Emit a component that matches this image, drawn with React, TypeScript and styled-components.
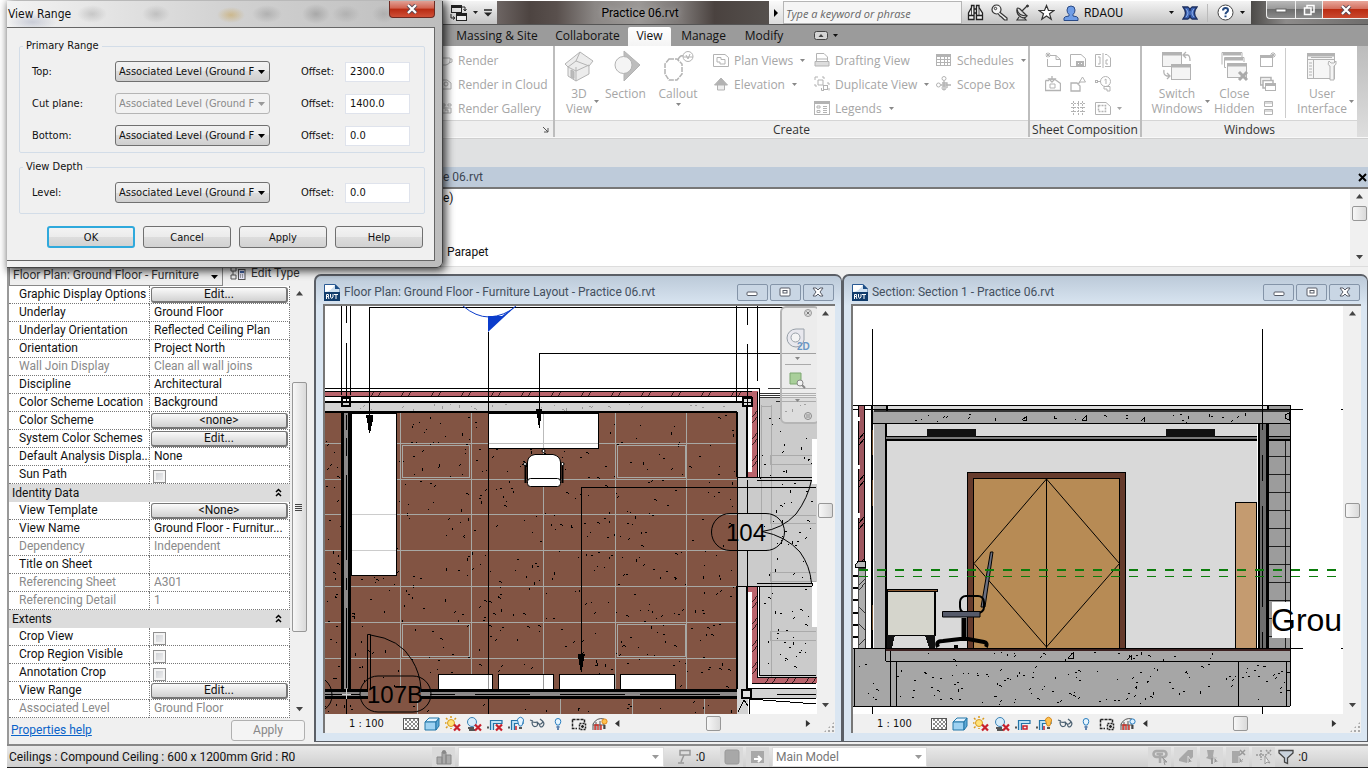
import React from 'react';
import styled, { createGlobalStyle, css } from 'styled-components';

const UI = 'Roboto, "Open Sans", sans-serif';
const RIBBON = '"Open Sans", "Noto Sans", sans-serif';
const DLG = '"DejaVu Sans Condensed", "DejaVu Sans", sans-serif';

const Global = createGlobalStyle`
  * { box-sizing: border-box; }
  body { margin: 0; background: #fff; font-family: ${UI}; font-size: 12px; color: #111; }
  button, input, select { font: inherit; color: inherit; margin: 0; }
  button { padding: 0; border: 0; background: none; }
`;

/* ---------- shared pieces ---------- */

const Shell = styled.main`
  position: relative;
  display: flex;
  flex-direction: column;
  min-height: 100vh;
  padding-left: 7px;
  overflow: hidden;
`;

const Svg = styled.svg<{ $w?: number; $h?: number }>`
  display: block;
  flex: none;
  width: ${p => p.$w ?? 16}px;
  height: ${p => p.$h ?? p.$w ?? 16}px;
  fill: none;
  stroke: currentColor;
`;

type IconProps = { children: React.ReactNode; size?: number; color?: string; box?: number };
const Icon = ({ children, size = 16, color, box }: IconProps) => (
  <Svg $w={size} viewBox={`0 0 ${box ?? size} ${box ?? size}`} color={color} aria-hidden="true">
    {children}
  </Svg>
);

const CaretSvg = styled.svg`
  display: block;
  flex: none;
  width: 5px;
  height: 3px;
  fill: currentColor;
`;
const Caret = () => (
  <CaretSvg viewBox="0 0 5 3" aria-hidden="true">
    <path d="M0 0H5L2.500 3Z" />
  </CaretSvg>
);

/* ---------- title bar ---------- */

const TitleBar = styled.header`
  display: flex;
  height: 25px;
  flex: none;
  border-top: 1px solid #fff;
  border-bottom: 1px solid #555;
  background: linear-gradient(#f4f4f4, #c4c4c4);
`;
const QuickAccess = styled.div`
  display: flex;
  align-items: center;
  gap: 6px;
  width: 490px;
  padding-left: 442px;
  color: #222;
`;
const TitleText = styled.h1`
  display: flex;
  flex: 1;
  align-items: center;
  justify-content: center;
  margin: 0;
  padding-left: 14px;
  overflow: hidden;
  font-size: 12px;
  font-weight: 400;
  color: #000;
  white-space: nowrap;
  text-shadow: 0 0 6px #bbb;
  background: linear-gradient(90deg, #6d6563 0, #4d4441 12%, #59504d 22%, #8b8785 36%, #9b9896 52%, #7c7775 68%, #4a423f 80%, #55504d 100%);
`;
const SearchGo = styled.button`
  width: 14px;
  background: linear-gradient(#fafafa, #dcdcdc);
  svg { margin: auto; }
`;
const SearchBox = styled.input`
  width: 179px;
  padding: 2px 2px 0;
  border: 1px solid #b5b5b5;
  background: #f5f5f5;
  font-family: ${RIBBON};
  font-size: 11px;
  font-style: italic;
  &::placeholder { color: #666; opacity: 1; }
`;
const InfoTools = styled.div`
  display: flex;
  align-items: center;
  justify-content: space-between;
  width: 101px;
  padding: 0 8px 0 5px;
`;
const Account = styled.button`
  display: flex;
  align-items: center;
  gap: 5px;
  width: 111px;
  span { flex: 1; text-align: left; }
`;
const ToolButton = styled.button`
  display: flex;
  align-items: center;
  justify-content: center;
  gap: 6px;
  height: 100%;
`;
const InfoEnd = styled.div`
  display: flex;
  align-items: center;
  gap: 9px;
  width: 77px;
  padding-left: 8px;
`;
const Rule = styled.span`
  width: 1px;
  height: 18px;
  background: #bbb;
`;
const FrameEnd = styled.div`
  display: flex;
  align-items: flex-start;
  justify-content: flex-end;
  width: 117px;
  background: linear-gradient(90deg, #4c4a48, #8d8b8a 30%, #6f6d6c);
`;
const FrameButton = styled.button<{ $w: number; $close?: boolean }>`
  display: flex;
  align-items: center;
  justify-content: center;
  width: ${p => p.$w}px;
  height: 18px;
  border: 1px solid #eee;
  border-top: 0;
  border-right-width: 0;
  color: #fff;
  background: ${p =>
    p.$close
      ? 'linear-gradient(#e8a79b, #d4705f 45%, #bb2c12 50%, #c9482f)'
      : 'linear-gradient(#b9b9b9, #9a9a9a 45%, #6d6d6d 50%, #8b8b8b)'};
  &:first-child { border-bottom-left-radius: 4px; }
`;

const CloseGlyph = () => (
  <Svg $w={12} $h={10} viewBox="0 0 12 10" aria-hidden="true">
    <path d="M2 1L10 9M10 1L2 9" stroke="#5b4a55" strokeWidth="4" />
    <path d="M2 1L10 9M10 1L2 9" stroke="#fff" strokeWidth="2.200" />
  </Svg>
);

/* ---------- ribbon ---------- */

const TabBar = styled.nav`
  display: flex;
  align-items: stretch;
  height: 21px;
  flex: none;
  padding-left: 440px;
  background: #9b9b9b;
  font-family: ${RIBBON};
`;
const Tab = styled.button<{ $w: number; $active?: boolean }>`
  width: ${p => p.$w}px;
  white-space: nowrap;
  color: #111;
  ${p => p.$active && css`
    margin-top: 2px;
    padding-bottom: 2px;
    border-radius: 2px 2px 0 0;
    background: linear-gradient(#fff, #f4f4f4);
  `}
`;
const TabToggle = styled.button`
  display: flex;
  align-items: center;
  gap: 5px;
  margin-left: 22px;
`;
const Ribbon = styled.section`
  display: flex;
  height: 92px;
  flex: none;
  border-bottom: 1px solid #f8f8f8;
  background: linear-gradient(#bcbcbc, #dedede);
  font-family: ${RIBBON};
  overflow: hidden;
`;
const RibbonPanel = styled.div<{ $w: number; $grow?: boolean }>`
  display: flex;
  flex-direction: column;
  flex: ${p => (p.$grow ? '1 0' : '0 0')} ${p => p.$w}px;
  background: #fff;
  & + & { border-left: 2px solid #bdbdbd; }
`;
const PanelBody = styled.div<{ $pad?: number }>`
  display: flex;
  flex: 1;
  padding: 2px 0 0 ${p => p.$pad ?? 0}px;
  color: #a6a6a6;
`;
const PanelTitle = styled.div`
  display: flex;
  align-items: center;
  justify-content: center;
  height: 17px;
  flex: none;
  border-top: 1px solid #d5d5d5;
  background: #efefef;
  color: #333;
  white-space: nowrap;
`;
const Launcher = styled.button`
  margin-left: auto;
  margin-right: 4px;
  color: #555;
`;
const CommandColumn = styled.div<{ $w?: number; $lead?: boolean }>`
  display: flex;
  flex-direction: column;
  flex: none;
  width: ${p => (p.$w ? `${p.$w}px` : 'auto')};
  margin-left: ${p => (p.$lead ? 4 : 0)}px;
`;
const Command = styled.button`
  display: flex;
  align-items: center;
  gap: 5px;
  height: 24px;
  white-space: nowrap;
  svg:last-child:not(:first-child) { color: #888; margin-left: 2px; }
`;
const BigCommand = styled.button<{ $w: number }>`
  display: flex;
  flex-direction: column;
  flex: none;
  align-items: center;
  width: ${p => p.$w}px;
  padding-top: 2px;
  line-height: 15px;
`;
const BigLabel = styled.span`
  display: grid;
  grid-template-columns: 1fr auto 1fr;
  align-items: center;
  align-self: stretch;
  gap: 2px;
  margin-top: 4px;
  svg { grid-column: 3; color: #888; }
  span { grid-column: 2; }
`;
const BelowCaret = styled.span`
  margin-top: 2px;
  color: #888;
`;
const IconGrid = styled.div`
  display: grid;
  grid-template-columns: 25px 25px 40px;
  grid-template-rows: 24px 24px 24px;
`;
const GridButton = styled.button<{ $col?: number }>`
  display: flex;
  align-items: center;
  gap: 6px;
  grid-column: ${p => p.$col ?? 'auto'};
`;
const PanelRule = styled.span`
  width: 1px;
  margin: 0 3px 2px 9px;
  background: #ccc;
`;
const RibbonTail = styled.span`
  width: 11px;
  flex: none;
`;

/* ---------- option strip and document view ---------- */

const OptionStrip = styled.div`
  height: 29px;
  flex: none;
  border-top: 1px solid #cfcfcf;
  background: #e0e1e2;
`;
const DocTitle = styled.div`
  display: flex;
  align-items: center;
  justify-content: space-between;
  height: 20px;
  flex: none;
  padding: 0 0 0 436px;
  background: #becbda;
  color: #3c4652;
`;
const DocClose = styled.button`
  color: #000;
`;
const DocView = styled.section`
  display: flex;
  height: 80px;
  flex: none;
  border-top: 2px solid #777;
  border-bottom: 1px solid #ddd;
  background: #fff;
`;
const DocLines = styled.div`
  display: flex;
  flex: 1;
  flex-direction: column;
  justify-content: space-between;
  padding: 1px 0 6px 436px;
  line-height: 16px;
`;
const LineTail = styled.span`
  padding-left: 4px;
`;

/* ---------- scroll bars ---------- */

const VTrack = styled.div`
  display: flex;
  flex-direction: column;
  align-items: center;
  justify-content: space-between;
  width: 18px;
  flex: none;
  background: #f0f0f0;
  color: #444;
`;
const HTrack = styled.div`
  display: flex;
  flex: 1;
  align-items: center;
  justify-content: space-between;
  min-width: 60px;
  color: #333;
`;
const Arrow = styled.button`
  display: flex;
  align-items: center;
  justify-content: center;
  flex: none;
  width: 17px;
  height: 17px;
`;
const Thumb = styled.span<{ $long?: boolean }>`
  display: flex;
  align-items: center;
  justify-content: center;
  width: 15px;
  ${p => (p.$long ? 'flex: 250 0 0;' : 'height: 15px;')}
  border: 1px solid #979797;
  border-radius: 2px;
  background: linear-gradient(90deg, #f7f7f7, #dadada);
`;
const Gap = styled.span<{ $grow: number }>`
  flex: ${p => p.$grow} 0 0;
`;
const arrows = {
  up: 'M0 5L4 0L8 5Z',
  down: 'M0 1L4 6L8 1Z',
  left: 'M5 0L0 4L5 8Z',
  right: 'M1 0L6 4L1 8Z',
};
const ScrollArrow = ({ dir }: { dir: keyof typeof arrows }) => (
  <Arrow type="button" aria-label={`Scroll ${dir}`}>
    <Svg $w={7} $h={7} viewBox="0 0 8 8" aria-hidden="true">
      <path d={arrows[dir]} fill="currentColor" stroke="none" />
    </Svg>
  </Arrow>
);

/* ---------- properties palette ---------- */

const Workspace = styled.section`
  display: flex;
  flex: 1;
  background: #f0f0f0;
`;
const Palette = styled.aside`
  display: flex;
  flex-direction: column;
  flex: none;
  width: 300px;
  border-left: 2px solid #999;
`;
const PaletteHead = styled.div`
  display: flex;
  align-items: center;
  height: 19px;
  gap: 7px;
  color: #333;
`;
const SelectWrap = styled.span<{ $w?: number }>`
  position: relative;
  display: inline-flex;
  flex: none;
  width: ${p => p.$w ?? 155}px;
  svg {
    position: absolute;
    right: 5px;
    top: 50%;
    margin-top: -2px;
    pointer-events: none;
  }
`;
const TypeSelect = styled.select`
  appearance: none;
  width: 100%;
  height: 18px;
  padding: 0 14px 4px 3px;
  border: 1px solid #888;
  border-top: 0;
  background: #eee;
`;
const EditType = styled.button`
  display: flex;
  align-items: center;
  gap: 5px;
  padding-bottom: 7px;
  white-space: nowrap;
`;
const PaletteBody = styled.div`
  display: flex;
  flex: 1;
`;
const Props = styled.table`
  width: 281px;
  flex: none;
  table-layout: fixed;
  border-spacing: 0;
  background: #fff;
  align-self: flex-start;
`;
const PropName = styled.th<{ $dim?: boolean }>`
  width: 140px;
  height: 18px;
  padding: 0 0 0 10px;
  border-bottom: 1px dotted #777;
  font-weight: 400;
  line-height: 17px;
  text-align: left;
  white-space: nowrap;
  overflow: hidden;
  color: ${p => (p.$dim ? '#8a8a8a' : '#111')};
`;
const PropValue = styled.td<{ $dim?: boolean; $btn?: boolean }>`
  height: 18px;
  padding: 0 1px 0 ${p => (p.$btn ? 1 : 4)}px;
  border: 0 dotted #777;
  border-width: 0 1px 1px 1px;
  line-height: 17px;
  white-space: nowrap;
  overflow: hidden;
  color: ${p => (p.$dim ? '#8a8a8a' : '#111')};
`;
const GroupHead = styled.th`
  height: 18px;
  padding: 0 8px 0 3px;
  background: #dcdcdc;
  font-weight: 400;
  line-height: 18px;
  text-align: left;
  svg { float: right; margin-top: 4px; }
`;
const CellButton = styled.button`
  display: block;
  width: 100%;
  height: 16px;
  border: 1px solid #777;
  border-right-width: 2px;
  border-bottom-width: 2px;
  border-radius: 3px;
  background: linear-gradient(#fafafa, #e2e2e2 60%, #d2d2d2);
  line-height: 13px;
`;
const Tick = styled.input`
  appearance: none;
  display: block;
  width: 13px;
  height: 13px;
  margin: 3px 0 0 -1px;
  border: 1px solid #8f8f8f;
  background: linear-gradient(135deg, #c9ccd1, #f4f4f4);
  box-shadow: inset 0 0 0 2px #f4f4f4;
`;
const PaletteFoot = styled.div`
  display: flex;
  align-items: center;
  justify-content: space-between;
  height: 26px;
  padding: 0 2px 2px;
`;
const HelpLink = styled.a`
  color: #0a63c9;
`;
const ApplyButton = styled.button`
  width: 74px;
  height: 21px;
  border: 1px solid #b0b0b0;
  border-radius: 3px;
  background: #f4f4f4;
  color: #888;
`;

type Row = { name: string; value?: string; kind?: 'text' | 'button' | 'tick' | 'group'; dim?: boolean };
const rows: Row[] = [
  { name: 'Graphic Display Options', value: 'Edit...', kind: 'button' },
  { name: 'Underlay', value: 'Ground Floor' },
  { name: 'Underlay Orientation', value: 'Reflected Ceiling Plan' },
  { name: 'Orientation', value: 'Project North' },
  { name: 'Wall Join Display', value: 'Clean all wall joins', dim: true },
  { name: 'Discipline', value: 'Architectural' },
  { name: 'Color Scheme Location', value: 'Background' },
  { name: 'Color Scheme', value: '<none>', kind: 'button' },
  { name: 'System Color Schemes', value: 'Edit...', kind: 'button' },
  { name: 'Default Analysis Displa...', value: 'None' },
  { name: 'Sun Path', kind: 'tick' },
  { name: 'Identity Data', kind: 'group' },
  { name: 'View Template', value: '<None>', kind: 'button' },
  { name: 'View Name', value: 'Ground Floor - Furnitur...' },
  { name: 'Dependency', value: 'Independent', dim: true },
  { name: 'Title on Sheet', value: '' },
  { name: 'Referencing Sheet', value: 'A301', dim: true },
  { name: 'Referencing Detail', value: '1', dim: true },
  { name: 'Extents', kind: 'group' },
  { name: 'Crop View', kind: 'tick' },
  { name: 'Crop Region Visible', kind: 'tick' },
  { name: 'Annotation Crop', kind: 'tick' },
  { name: 'View Range', value: 'Edit...', kind: 'button' },
  { name: 'Associated Level', value: 'Ground Floor', dim: true },
];

const PropertyRow = ({ row }: { row: Row }) => {
  if (row.kind === 'group') {
    return (
      <tr>
        <GroupHead colSpan={2} scope="colgroup">
          {row.name}
          <Svg $w={7} $h={9} viewBox="0 0 7 9" aria-hidden="true">
            <path d="M1 4L3.500 1.500L6 4M1 8L3.500 5.500L6 8" stroke="#000" strokeWidth="1.500" />
          </Svg>
        </GroupHead>
      </tr>
    );
  }
  const id = `prop-${row.name.replace(/\W+/g, '-')}`;
  return (
    <tr>
      <PropName scope="row" $dim={row.dim}>
        {row.kind === 'tick' ? <label htmlFor={id}>{row.name}</label> : row.name}
      </PropName>
      <PropValue $dim={row.dim} $btn={row.kind === 'button'}>
        {row.kind === 'button' && <CellButton type="button">{row.value}</CellButton>}
        {row.kind === 'tick' && <Tick type="checkbox" id={id} />}
        {!row.kind && row.value}
      </PropValue>
    </tr>
  );
};

/* ---------- document windows ---------- */

const Windows = styled.div`
  display: flex;
  flex: 1;
  min-width: 0;
  padding: 7px 0 2px 7px;
`;
const Mdi = styled.article<{ $grow: number }>`
  display: flex;
  flex-direction: column;
  flex: ${p => p.$grow} 0 0;
  min-width: 0;
  padding: 0 6px 8px 7px;
  border: 2px solid #5b5f66;
  border-right-width: 1px;
  border-bottom-width: 1px;
  border-radius: 7px 7px 0 0;
  background: linear-gradient(#bccad9, #dae6f2 30px);
`;
const MdiTitle = styled.header`
  display: flex;
  align-items: center;
  gap: 4px;
  height: 28px;
  flex: none;
  padding: 4px 1px 0 1px;
  color: #44505f;
  h2 { flex: 1; margin: 0; overflow: hidden; font-size: 12px; font-weight: 400; white-space: nowrap; }
`;
const MdiButtons = styled.div`
  display: flex;
  gap: 2px;
`;
const MdiButton = styled.button`
  display: flex;
  align-items: center;
  justify-content: center;
  width: 31px;
  height: 17px;
  border: 1px solid #8494a8;
  border-radius: 2px;
  background: #c9d6e4;
  color: #565b66;
`;
const MdiBody = styled.div`
  display: grid;
  flex: 1;
  grid-template-columns: minmax(0, 1fr) 18px;
  grid-template-rows: minmax(0, 1fr) 19px;
  border: 1px solid #777;
  border-width: 2px 0 0 2px;
  background: #f0f0f0;
`;
const Canvas = styled.div`
  position: relative;
  overflow: hidden;
  background: #fff;
`;
const Drawing = styled.svg`
  position: absolute;
  width: 100%;
  height: 100%;
  font-family: "Liberation Sans", Arial, sans-serif;
`;
const ViewBar = styled.div`
  display: flex;
  align-items: center;
  padding-left: 24px;
`;
const Scale = styled.span`
  width: 54px;
  font-family: ${DLG};
  font-size: 11px;
  white-space: nowrap;
`;
const ViewTools = styled.div`
  display: flex;
  gap: 5px;
  padding-right: 2px;
`;
const Grip = styled.span`
  width: 12px;
  height: 12px;
  place-self: end;
  background: radial-gradient(#aaa 1px, transparent 1px) 0 0 / 4px 4px;
  clip-path: polygon(100% 0, 100% 100%, 0 100%);
`;

const RvtIcon = () => (
  <Svg $w={16} $h={17} viewBox="0 0 16 17" aria-hidden="true">
    <path d="M.5 .5H11L15.500 5V16H.5Z" fill="#fff" stroke="#2a5a94" />
    <path d="M.5 8Q8 7 11 .5L15.500 5V10H.5Z" fill="#cfe0f0" stroke="none" />
    <path d="M11 0L16 5H11Z" fill="#1d4e86" stroke="none" />
    <rect y="8" width="16" height="9" fill="#113c6c" stroke="none" />
    <path d="M2.500 15V10.500H4.500V12.500H2.500M4 12.500L5 15M6.500 10V13L7.700 14.500L9 13V10M10 10.500H14M12 10.500V15" stroke="#fff" />
  </Svg>
);

const RedX = () => <path d="M9 8.500L15 14.500M15 8.500L9 14.500" stroke="#c8202c" strokeWidth="2.200" />;
const CropBase = () => (
  <>
    <path d="M3.500 14V4.500H15V7.500H6.500V14" fill="#bfe3f7" stroke="#2474a8" strokeWidth="1.200" />
    <path d="M0 11.500H3" stroke="#555" strokeWidth="2" strokeDasharray="2 1" />
  </>
);

const ViewControls = ({ section }: { section?: boolean }) => (
  <ViewTools>
    <Icon>
      <rect x=".5" y="2.500" width="15" height="11" fill="#fff" stroke="#555" />
      <path d="M2 4H15M2 8H15M2 12H15" stroke="#8a8a8a" strokeDasharray="2 2" strokeWidth="2" />
      <path d="M4 6H15M4 10H15" stroke="#8a8a8a" strokeDasharray="2 2" strokeWidth="2" />
    </Icon>
    <Icon>
      <path d="M1 6L5 2H15L12 6Z" fill="#e2f3ff" stroke="#2377a8" />
      <path d="M1 6H12V14H1Z" fill="#9ed2f2" stroke="#2377a8" />
      <path d="M12 6L15 2V10L12 14Z" fill="#5ea9d6" stroke="#2377a8" />
    </Icon>
    <Icon>
      <circle cx="6" cy="7" r="3.500" fill="#ffe27a" stroke="#d99a1c" />
      <path d="M6 0V2M1 2L2.500 3.500M0 7H1.500M1 12L2.500 10.500M11 2L9.500 3.500M6 12V13" stroke="#d99a1c" strokeWidth="1.500" />
      <RedX />
    </Icon>
    <Icon>
      <circle cx="6" cy="6" r="4.500" fill="#d6ecfa" stroke="#3b82b6" />
      <path d="M2 12H8M3 14H9" stroke="#555" strokeWidth="2" />
      <RedX />
    </Icon>
    <Icon>
      <CropBase />
      {section ? <path d="M8 10H12V13H8Z" stroke="#c8202c" strokeWidth="1.500" /> : <RedX />}
    </Icon>
    <Icon>
      <CropBase />
      <path d="M8 10V14" stroke="#c8202c" strokeWidth="1.500" />
      <path d="M10 6A3 3 0 1 1 15 6Q15 8 13.500 10H11.500Q10 8 10 6Z" fill={section ? '#ffc24d' : '#e6f5ff'} stroke={section ? '#d6871d' : '#2b7fc0'} />
      <path d="M11 12H14" stroke="#555" strokeWidth="2" />
    </Icon>
    <Icon>
      <path d="M1 4L4 5M3 5.500Q3 11 6.500 10.500Q9.500 10 8 6M3 5.500Q6 7 8 6L10.500 8.500M10.500 8.500Q11 12 13.500 10.500Q16 8 14 5.500L11 3M10.500 8.500Q13 8 14 5.500" stroke="#4a5f70" strokeWidth="1.200" />
    </Icon>
    <Icon>
      <path d="M8 2.500A2.800 2.800 0 0 1 10.800 5.300Q10.800 7 9.300 9H6.700Q5.200 7 5.200 5.300A2.800 2.800 0 0 1 8 2.500Z" fill="#e6f5ff" stroke="#2b7fc0" />
      <path d="M6.500 11H9.500M7 13H9" stroke="#2f5f9a" strokeWidth="1.500" />
    </Icon>
    <Icon>
      <path d="M1.500 3.500H13.500V7M1.500 3.500V12.500H6" stroke="#222" strokeWidth="1.500" strokeDasharray="3 1" />
      <rect x="8.500" y="7.500" width="6" height="6" stroke="#222" strokeWidth="1.500" strokeDasharray="2 1" />
      <circle cx="11.500" cy="10.500" r="1" fill="#222" />
    </Icon>
    <Icon>
      <path d="M1 14V8Q5 1 12 3V13M4 14V6M8 14V5M1 9H12" stroke="#555" />
      <path d="M3 14V9H6V14M9 14V9" stroke="#d0342c" strokeWidth="1.500" />
      <circle cx="12.500" cy="5.500" r="2.600" fill={section ? '#dff1ff' : '#ffc24d'} stroke={section ? '#2b7fc0' : '#e08a1e'} />
      <path d="M12.500 9V13" stroke="#444" strokeWidth="2" />
    </Icon>
  </ViewTools>
);

type MdiProps = { title: string; grow: number; section?: boolean; children: React.ReactNode };
const MdiWindow = ({ title, grow, section, children }: MdiProps) => (
  <Mdi $grow={grow}>
    <MdiTitle>
      <RvtIcon />
      <h2>{title}</h2>
      <MdiButtons>
        <MdiButton type="button" aria-label="Minimize">
          <Svg $w={12} $h={10} viewBox="0 0 12 10"><rect x="1" y="5" width="10" height="3.500" rx="1" fill="#fff" /></Svg>
        </MdiButton>
        <MdiButton type="button" aria-label="Maximize">
          <Svg $w={12} $h={10} viewBox="0 0 12 10">
            <rect x="1" y="1" width="10" height="8" rx="1" fill="#fff" />
            <rect x="4" y="3.500" width="4" height="2.500" />
          </Svg>
        </MdiButton>
        <MdiButton type="button" aria-label="Close">
          <Svg $w={12} $h={10} viewBox="0 0 12 10">
            <path d="M1 1H4L6 3L8 1H11L8 5L11 9H8L6 7L4 9H1L4 5Z" fill="#fff" />
          </Svg>
        </MdiButton>
      </MdiButtons>
    </MdiTitle>
    <MdiBody>
      <Canvas>{children}</Canvas>
      <VTrack>
        <ScrollArrow dir="up" />
        <Thumb />
        <ScrollArrow dir="down" />
      </VTrack>
      <ViewBar>
        <Scale>1 : 100</Scale>
        <ViewControls section={section} />
        <HTrack>
          <ScrollArrow dir="left" />
          <Thumb />
          <ScrollArrow dir="right" />
        </HTrack>
      </ViewBar>
      <Grip />
    </MdiBody>
  </Mdi>
);

/* ---------- drawings ---------- */

const marks = ['h1', 'h1', 'h1v1', 'h2', 'l1 1', 'l2 -1', 'l-2 2', 'l1 2', 'l2 1h1', 'l-1 3'];

/** Concrete and carpet texture: short strokes scattered over a rectangle. */
function stipple(seed: number, count: number, x: number, y: number, w: number, h: number) {
  let s = seed;
  const next = () => {
    s = (s * 1103515245 + 12345) % 2147483648;
    return s / 2147483648;
  };
  let d = '';
  for (let i = 0; i < count; i++) {
    const px = Math.round(x + next() * w);
    const py = Math.round(y + next() * h);
    d += `M${px} ${py}${marks[Math.floor(next() * marks.length)]}`;
  }
  return d;
}

/** Evenly spaced diagonal brick hatch between two horizontal edges. */
function hatchRow(x0: number, x1: number, y0: number, y1: number, step: number) {
  let d = '';
  for (let x = x0; x < x1; x += step) d += `M${x} ${y1}L${x + 5} ${y0}M${x + 7} ${y1}L${x + 12} ${y0}`;
  return d;
}
function hatchColumn(x0: number, x1: number, y0: number, y1: number, step: number) {
  let d = '';
  for (let y = y0; y < y1; y += step) d += `M${x0} ${y + 7}L${x1} ${y}M${x0} ${y + 13}L${x1} ${y + 6}`;
  return d;
}

const BROWN = '#825443';
const BRICK = '#b9646c';

const FloorPlan = () => (
  <Drawing aria-label="Floor plan" role="img">
    <g transform="translate(-325 -306)" fill="none" stroke="#000" shapeRendering="crispEdges">
      <rect x="325" y="412" width="412" height="303" fill={BROWN} stroke="none" />
      <rect x="760" y="398" width="60" height="290" fill="#cbcbcb" stroke="none" />
      <rect x="737" y="403" width="11" height="312" fill="#d3d3d3" stroke="none" />
      <rect x="737" y="478" width="83" height="108" fill="#cbcbcb" stroke="none" />
      <path d={stipple(7, 460, 351, 414, 384, 272)} />
      <path d={stipple(19, 30, 326, 414, 14, 272)} />
      <path d={stipple(23, 26, 326, 700, 408, 12)} />
      <path d={stipple(31, 90, 762, 402, 50, 270)} />

      <g stroke="#a8a8a4">
        <path d="M325 443.500H737M325 479.500H737M325 514.500H737M325 550.500H737M325 586.500H737M325 622.500H737M325 658.500H737" />
        <path d="M400.500 413V689M471.500 413V689M543.500 413V689M615.500 413V689M686.500 413V689M417.500 699V715M560.500 699V715M632.500 699V715M704.500 699V715" />
        <path d="M402.500 445.500H469.500V477.500H402.500ZM617.500 445.500H685.500V477.500H617.500ZM402.500 624.500H469.500V656.500H402.500ZM617.500 624.500H685.500V656.500H617.500Z" />
      </g>
      <g stroke="#aaa">
        <path d="M761.500 405V520M771.500 405V690M762 406.500H772M816 455.500H770V464.500H816M816 515.500H770V523.500H816M816 572.500H770V581.500H816M816 631.500H770V640.500H816" />
      </g>

      <rect x="351" y="413" width="45.500" height="162.500" fill="#fff" />
      <path d="M352 514.500H396M352 550.500H396" stroke="#ccc" />
      <rect x="488.500" y="413.500" width="110" height="35" fill="#fff" />
      <path d="M489 443.500H598M543.500 414V448" stroke="#bbb" />

      <rect x="325" y="391" width="433" height="6" fill={BRICK} stroke="none" />
      <rect x="325" y="397" width="412" height="5" fill="#fff" stroke="none" />
      <rect x="325" y="403" width="413" height="8" fill="#d3d3d3" stroke="none" />
      <path d={hatchRow(370, 745, 391, 397, 30)} strokeWidth=".7" />
      <path d={stipple(41, 28, 345, 404, 380, 5)} stroke="#999" />
      <path d="M325 388.500H760M325 391.500H757M325 396.500H752" />
      <path d="M325 402H746M325 412H737" strokeWidth="2" />

      <path d="M341.500 306V395M350.500 306V395M736.500 306V401M757.500 306V381" />
      <path d="M346.500 306V323M346.500 343V401M747.500 308V325M747.500 344V401" />
      <rect x="341" y="412" width="10" height="287" fill="#000" stroke="none" />
      <rect x="344" y="413" width="4" height="277" fill="#8b8888" stroke="none" />
      <path d="M346.500 415V430M346.500 438V456M346.500 475V560M346.500 578V590M346.500 608V688M346.500 699V715" />
      <rect x="342" y="398" width="8" height="8" strokeWidth="2" />

      <path d="M816 307.500H369.500V416M539.500 410V353.500H816M581.500 655V487.500H816M488.500 332V715" />
      <path d="M366 415H373V420L370 433H369L367 420ZM536 409H542L541 415L540 428H539L537 415ZM578 654H585L583 663L582 672H581L579 663Z" fill="#000" stroke="none" />
      <path d="M463 306Q476 317 489 317Q505 316 516 306" stroke="#0b3ccb" shapeRendering="auto" />
      <path d="M488 316L502 316L516 306L488 332Z" fill="#0b3ccb" stroke="none" shapeRendering="auto" />

      <g shapeRendering="auto" fill="#fff">
        <circle cx="543.500" cy="451" r="1.500" />
        <path d="M527.500 482V462Q528 455.500 535 454.500H553Q560 456 560.500 462V482Z" />
        <rect x="527.500" y="478.500" width="33" height="8" rx="3" />
        <path d="M525.500 464V483M562.500 464V483" strokeWidth="2" />
        <circle cx="525" cy="464" r="1.500" />
        <circle cx="562.500" cy="464" r="1.500" />
      </g>

      <rect x="748" y="403" width="5" height="70" fill="#fff" stroke="none" />
      <rect x="752" y="391" width="6" height="87" fill={BRICK} stroke="none" />
      <rect x="748" y="472" width="10" height="6" fill={BRICK} stroke="none" />
      <path d={hatchColumn(752, 758, 410, 470, 22)} strokeWidth=".7" />
      <path d="M757.500 392V477M759.500 389V478" />
      <path d="M747 402V477M737 412V477" strokeWidth="2" />
      <rect x="743" y="398" width="9" height="8" fill="#ddd" strokeWidth="2" />
      <path d="M747.500 396V408M742 402H753" />
      <path d="M760 393.500H816M760 395.500H816M760 397.500H816M768 388.500H816M776 401.500H816" strokeWidth=".8" />
      <path d="M737 477.500H812M757 480.500H812M737.500 478V586M747.500 480V513M747.500 550V586" />
      <rect x="812" y="439" width="5" height="45" fill="#fff" stroke="none" />
      <rect x="812" y="582" width="5" height="45" fill="#fff" stroke="none" />

      <rect x="748" y="586" width="5" height="100" fill="#fff" stroke="none" />
      <rect x="748" y="586" width="10" height="6" fill={BRICK} stroke="none" />
      <rect x="752" y="588" width="6" height="95" fill={BRICK} stroke="none" />
      <rect x="752" y="677" width="66" height="6" fill={BRICK} stroke="none" />
      <rect x="750" y="683" width="67" height="5" fill="#fff" stroke="none" />
      <path d={hatchColumn(752, 758, 595, 670, 22)} strokeWidth=".7" />
      <path d={hatchRow(765, 816, 677, 683, 20)} strokeWidth=".7" />
      <path d="M757.500 586V677M759.500 586V675.500H816M757 677.500H816M752 683.500H816M737 586.500H812M757 583.500H812V586" />
      <path d="M737 586V689M747 586V689" strokeWidth="2" />
      <rect x="748" y="689" width="70" height="9" fill="#d3d3d3" stroke="none" />
      <rect x="750" y="699" width="70" height="16" fill="#fff" stroke="none" />
      <path d="M748 688.500H816M748 698.500H816M777 694.500H816M750 699L816 704M749.500 699V715M738 712L744 700L748 706" />

      <path d="M438.500 674.500H492.500V689H438.500ZM498.500 674.500H553.500V689H498.500ZM559.500 674.500H614.500V689H559.500ZM620.500 674.500H675.500V689H620.500Z" fill="#fff" />
      <path d="M543.500 675V689M488.500 675V689" stroke="#999" />
      <rect x="325" y="689" width="412" height="10" fill="#000" stroke="none" />
      <rect x="325" y="692" width="412" height="4" fill="#8b8888" stroke="none" />
      <path d="M325 694.500H360M430 694.500H455M475 694.500H530M560 694.500H625M640 694.500H720" />
      <rect x="368" y="688" width="53" height="12" fill={BROWN} stroke="none" />
      <path d="M346.500 689V699M342 694.500H351" stroke="#ccc" />
      <rect x="742" y="690" width="9" height="8" fill="#ddd" strokeWidth="2" />

      <g shapeRendering="auto">
        <path d="M367.500 689V634.500H370.500V689M370.500 635Q400 639 412 660Q420 673 421 689" />
        <path d="M378 676H413A18 18 0 0 1 413 712H378A18 18 0 0 1 378 676Z" />
        <path d="M325 680Q332 686 332 695Q332 704 325 709" />
        <path d="M730 513.500H766A18 18 0 0 1 766 550.500H730A18 18 0 0 1 730 513.500Z" />
        <path d="M811.500 480Q808 498 796 514Q782 529 762 531.500Q786 536 800 552Q810 566 811.500 583" />
        <text x="367" y="703" fontSize="24" fill="#000" stroke="none">107B</text>
        <text x="726" y="541" fontSize="24" fill="#000" stroke="none">104</text>
      </g>

      <g shapeRendering="auto">
        <rect x="781" y="307" width="38" height="116" rx="5" fill="#e4e4e4" fillOpacity=".7" stroke="#b5b5b5" strokeWidth="2" />
        <circle cx="808" cy="313" r="3.500" fill="#ddd" stroke="#999" />
        <path d="M806.500 311.500L809.500 314.500M809.500 311.500L806.500 314.500" stroke="#777" />
        <path d="M787 338A9 9 0 0 1 796 329H804V340A9 9 0 0 1 796 347A9 9 0 0 1 787 338Z" fill="#e8e8ee" stroke="#98a0a8" />
        <circle cx="795.500" cy="337.500" r="4.500" fill="#f4f4f4" stroke="#98a0a8" />
        <text x="797" y="350" fontSize="10" fontWeight="700" fill="#6a97c4" stroke="none">2D</text>
        <path d="M795 357H800L797.500 360ZM795 399H800L797.500 402Z" fill="#888" stroke="none" />
        <path d="M785 364.500H811" stroke="#aaa" />
        <path d="M790 373H801V384H790Z" fill="#a9cf9a" stroke="#7da771" />
        <circle cx="800" cy="383" r="3" fill="#f2f2f2" stroke="#888" />
        <path d="M802 385L805 388" stroke="#888" strokeWidth="2" />
        <circle cx="808" cy="416" r="3.500" stroke="#888" />
        <path d="M806 415H810M806 417H810" stroke="#888" />
      </g>
    </g>
  </Drawing>
);

const blockLines = [456, 474, 492, 510, 528, 546, 564, 582, 600, 618, 636]
  .map((y, i) => `M1269 ${y}.5H1290M1285.5 ${i % 2 ? y - 36 : y}v18`)
  .join('');

const SectionView = () => (
  <Drawing aria-label="Building section" role="img">
    <g transform="translate(-853 -306)" fill="none" stroke="#000" shapeRendering="crispEdges">
      <rect x="873" y="405" width="417" height="20" fill="#dcdcdc" stroke="none" />
      <rect x="886" y="423" width="372" height="226" fill="#d9d9d9" stroke="none" />
      <rect x="874" y="405" width="12" height="244" fill="#aeaeae" stroke="none" />
      <rect x="1269" y="405" width="21" height="244" fill="#9c9c9c" stroke="none" />
      <path d={blockLines} strokeWidth=".8" />
      <rect x="873" y="411" width="417" height="12" fill="#a6a6a6" stroke="none" />
      <path d={stipple(3, 26, 890, 413, 395, 9)} />
      <path d="M1023 420H1026V417L1022 420M1082 420H1086V416L1082 420M1141 421L1144 418V422M1285 415L1289 413V420L1285 418Z" />
      <path d="M853 405.500H1290.500V706M853 409.500H1303M873 423.500H1290M1341 409.500H1344M1341 648.500H1344" />
      <path d="M874 411H1290" strokeWidth="2" stroke="#333" />
      <path d="M886.500 405V411M1268 405V410" strokeWidth="2" />

      <rect x="858.500" y="405.500" width="6" height="156" fill="#9e5760" />
      <path d={hatchColumn(859, 865, 432, 560, 42)} />
      <path d="M856 417H860V421H856ZM856 465H860V469H856ZM856 513H860V518H856Z" fill="#fff" stroke="none" />
      <path d="M855.500 567.500V565L858 561.500H865V567.500Z" fill="#bbb" />
      <rect x="858.500" y="568" width="7" height="80" fill="#b0b0b0" strokeWidth=".7" />
      <path d="M859 585L865 579M859 590L865 583M859 607L865 613M859 624L865 630M859 645L865 639" strokeWidth=".7" />
      <path d="M853 576H858M853 588H858M853 600H858M853 613H858M853 625H858M853 637H858" strokeWidth="2" />

      <path d="M872.500 329V405M872.500 649V658M872.500 683V715" />
      <path d="M872 405V649M886 423V649" strokeWidth="2" />
      <path d="M872.500 430V455M872.500 480V506M872.500 605V630" stroke="#6b4a2a" />

      <rect x="886" y="436" width="404" height="4" fill="#7a7a7a" stroke="none" />
      <path d="M886 436.500H1290" />
      <path d="M886 440H1290" strokeWidth="2" />
      <path d="M927 429H976V437H927ZM1166 429H1215V437H1166Z" fill="#111" stroke="none" />

      <rect x="967.500" y="472.500" width="158" height="176" fill="#663b2c" />
      <rect x="973.500" y="478.500" width="146" height="170" fill="#b78b55" />
      <path d="M1046.500 478V648" />
      <path d="M1046.500 479L974 563.500L1046.500 647L1119.500 563.500Z" shapeRendering="auto" />

      <rect x="1235.500" y="502.500" width="21" height="146" fill="#c49b70" />
      <rect x="1257" y="423" width="12" height="226" fill="#000" stroke="none" />
      <path d="M1257.500 424V648" stroke="#fff" />
      <rect x="1260" y="424" width="6" height="225" fill="#6e6e6e" stroke="none" />
      <path d="M1262.500 329V430M1262.500 455V481M1262.500 506V607M1262.500 632V658M1262.500 683V715" />

      <rect x="887" y="591" width="48" height="44" fill="#d5d5cc" />
      <rect x="887" y="589.500" width="50" height="2" fill="#8a5a32" />
      <path d="M935 592V635" strokeWidth="2" />
      <path d="M887 635H895L892 648H887ZM925 635H935V648H929Z" fill="#111" stroke="none" />
      <g shapeRendering="auto">
        <path d="M990.500 552H993L985 607H981Z" fill="#6b6f80" />
        <rect x="960" y="596" width="24" height="17" rx="6" strokeWidth="2" />
        <path d="M942.500 611.500H980V617H942.500Z" fill="#555a6a" />
        <path d="M964 618V638" strokeWidth="5" />
        <path d="M938 647Q935 641 943 641L960 639H968L984 642Q988 643 986 647M956 645V648" strokeWidth="4" />
      </g>

      <path d="M859 570H1336" stroke="#0b7d0b" strokeWidth="2" strokeDasharray="9 9" />
      <path d="M859 576.500H1336" stroke="#0b7d0b" strokeDasharray="9 9" />

      <rect x="853" y="649" width="437" height="57" fill="#a6a6a6" stroke="none" />
      <path d={stipple(11, 22, 890, 652, 396, 8)} />
      <path d={stipple(13, 130, 856, 664, 428, 40)} />
      <path d="M853 648.500H1303M886 661.500H1290M885.500 649V661M854.500 649V706M890.500 650V706M896.500 662V706M1238.500 662V706M1286.500 662V706M853 706.500H1290M1286 672H1290M1286 690H1290" />
      <path d="M886 650H1290" stroke="#3b2020" strokeWidth="2" />
      <path d="M1068 658H1073V653L1068 658M1127 660L1131 656V660" />

      <rect x="1272" y="602" width="18" height="36" fill="#fff" stroke="none" />
      <text x="1271" y="631" fontSize="32" fill="#000" stroke="none" shapeRendering="auto">Grou</text>
    </g>
  </Drawing>
);

/* ---------- status bar ---------- */

const StatusBar = styled.footer`
  display: flex;
  align-items: center;
  height: 24px;
  flex: none;
  border-top: 2px solid #888;
  border-bottom: 1px solid #222;
  background: linear-gradient(#e9e9e9, #cfcfcf);
  white-space: nowrap;
`;
const StatusText = styled.span`
  width: 425px;
  padding-left: 2px;
`;
const StatusIcon = styled.button<{ $w?: number }>`
  display: flex;
  align-items: center;
  justify-content: center;
  gap: 4px;
  width: ${p => p.$w ?? 23}px;
  height: 20px;
  margin-right: 3px;
  background: #dadada;
  color: #999;
`;
const Flat = styled(StatusIcon)`
  background: none;
  color: #222;
`;
const StatusSelect = styled.select`
  appearance: none;
  width: 100%;
  height: 20px;
  padding: 0 20px 0 3px;
  border: 1px solid #ddd;
  border-radius: 0;
  background: #fff;
  color: #777;
  opacity: 1;
`;
const StatusEnd = styled.div`
  display: flex;
  margin-left: auto;
  padding-right: 57px;
`;

/* ---------- dialog ---------- */

const Dialog = styled.section`
  position: absolute;
  top: 1px;
  left: 7px;
  width: 436px;
  height: 267px;
  padding: 0 7px 7px 0;
  border: 1px solid #444;
  border-width: 0 1px 1px 0;
  border-radius: 0 0 6px 0;
  background: linear-gradient(90deg, #f3f3f3, #d2d2d2 50%, #bdbdbd);
  box-shadow: 2px 2px 9px 1px rgba(0, 0, 0, 0.75);
  font-family: ${DLG};
  font-size: 11px;
`;
const DialogTitle = styled.header`
  display: flex;
  align-items: flex-start;
  justify-content: space-between;
  height: 26px;
  background:
    radial-gradient(closest-side, #8f98b366, transparent) 0 12px / 50px 18px no-repeat,
    radial-gradient(closest-side, #88888855, transparent) 70px 4px / 30px 18px no-repeat,
    radial-gradient(closest-side, #88888855, transparent) 135px 4px / 28px 18px no-repeat,
    radial-gradient(closest-side, #c69b3f77, transparent) 210px 6px / 28px 16px no-repeat,
    radial-gradient(closest-side, #77777755, transparent) 245px 4px / 30px 18px no-repeat,
    radial-gradient(closest-side, #77777766, transparent) 295px 3px / 28px 20px no-repeat,
    radial-gradient(closest-side, #88888855, transparent) 325px 4px / 28px 18px no-repeat,
    radial-gradient(closest-side, #88888855, transparent) 365px 4px / 24px 18px no-repeat;
  h2 { margin: 0; padding: 5px 0 0 1px; font-size: 12px; font-weight: 400; line-height: 16px; }
`;
const DialogClose = styled.button`
  display: flex;
  align-items: center;
  justify-content: center;
  width: 46px;
  height: 17px;
  border: 1px solid #6d2a22;
  border-top: 0;
  border-radius: 0 0 4px 4px;
  background: linear-gradient(#e0a095, #d2624f 45%, #b82a12 50%, #cf5038);
`;
const DialogBody = styled.form`
  display: flex;
  flex-direction: column;
  height: 234px;
  padding: 11px 9px 0 12px;
  border: 1px solid #666;
  border-left: 0;
  background: #f0f0f0;
`;
const Group = styled.fieldset<{ $h: number; $mt?: number }>`
  min-width: 0;
  height: ${p => p.$h}px;
  margin: ${p => p.$mt ?? 0}px 0 0;
  padding: 8px 14px 0 12px;
  border: 1px solid #d3dde8;
  border-radius: 2px;
  legend { margin-left: -9px; padding: 0 3px; line-height: 14px; }
`;
const Fields = styled.div`
  display: flex;
  flex-direction: column;
  gap: 11px;
`;
const Field = styled.div`
  display: flex;
  align-items: center;
  height: 21px;
  label:first-child { width: 83px; }
  label:nth-of-type(2) { width: 44px; margin-left: 31px; }
`;
const LevelSelect = styled.select`
  appearance: none;
  width: 100%;
  height: 21px;
  padding: 0 14px 0 3px;
  border: 1px solid #707070;
  border-radius: 3px;
  background: linear-gradient(#f2f2f2, #ebebeb 50%, #dddddd 50%, #cfcfcf);
  &:disabled { border-color: #b5b5b5; background: #f2f2f2; color: #8a8a8a; opacity: 1; }
`;
const OffsetInput = styled.input`
  width: 65px;
  height: 20px;
  padding: 0 4px;
  border: 1px solid #dfe3ec;
  background: #fff;
`;
const DialogActions = styled.div`
  display: flex;
  justify-content: flex-end;
  gap: 8px;
  margin-top: 12px;
  padding-right: 2px;
`;
const DialogButton = styled.button<{ $main?: boolean }>`
  width: 88px;
  height: 22px;
  border: ${p => (p.$main ? '2px solid #2fa9dc' : '1px solid #707070')};
  border-radius: 3px;
  background: linear-gradient(#f3f3f3, #ebebeb 50%, #dddddd 50%, #d2d2d2);
`;

const LevelRow = ({ label, offset, disabled }: { label: string; offset: string; disabled?: boolean }) => {
  const id = label.replace(/\W/g, '').toLowerCase();
  return (
    <Field>
      <label htmlFor={`${id}-level`}>{label}</label>
      <SelectWrap>
        <LevelSelect id={`${id}-level`} disabled={disabled}>
          <option>Associated Level (Ground F</option>
        </LevelSelect>
        <Svg $w={7} $h={4} viewBox="0 0 7 4" color={disabled ? '#999' : '#000'}>
          <path d="M0 0H7L3.500 4Z" fill="currentColor" stroke="none" />
        </Svg>
      </SelectWrap>
      <label htmlFor={`${id}-offset`}>Offset:</label>
      <OffsetInput id={`${id}-offset`} defaultValue={offset} />
    </Field>
  );
};

const ViewRangeDialog = () => (
  <Dialog role="dialog" aria-label="View Range">
    <DialogTitle>
      <h2>View Range</h2>
      <DialogClose type="button" aria-label="Close"><CloseGlyph /></DialogClose>
    </DialogTitle>
    <DialogBody onSubmit={e => e.preventDefault()}>
      <Group $h={114}>
        <legend>Primary Range</legend>
        <Fields>
          <LevelRow label="Top:" offset="2300.0" />
          <LevelRow label="Cut plane:" offset="1400.0" disabled />
          <LevelRow label="Bottom:" offset="0.0" />
        </Fields>
      </Group>
      <Group $h={54} $mt={7}>
        <legend>View Depth</legend>
        <LevelRow label="Level:" offset="0.0" />
      </Group>
      <DialogActions>
        <DialogButton type="submit" $main>OK</DialogButton>
        <DialogButton type="button">Cancel</DialogButton>
        <DialogButton type="button">Apply</DialogButton>
        <DialogButton type="button">Help</DialogButton>
      </DialogActions>
    </DialogBody>
  </Dialog>
);

/* ---------- page ---------- */

const ICON_GREY = '#b3b3b3';

const Titles = () => (
  <TitleBar>
    <QuickAccess>
      <Icon size={18}>
        <rect x="2.500" y="1.500" width="10" height="7" /><path d="M2 3H12" strokeWidth="2" />
        <rect x="7.500" y="9.500" width="10" height="7" fill="#eee" /><path d="M8 11H17" strokeWidth="2" />
        <path d="M13 3H16V6M14.500 5L16 7L17.500 5M2 10V14H5M4 12.500L6 14L4 15.500" />
      </Icon>
      <Caret />
      <ToolButton type="button" aria-label="Customize">
        <Icon size={8}><path d="M0 1H8" strokeWidth="1.500" /><path d="M0 3.500H8L4 7.500Z" fill="currentColor" stroke="none" /></Icon>
      </ToolButton>
    </QuickAccess>
    <TitleText>Practice 06.rvt</TitleText>
    <SearchGo type="button" aria-label="Show search">
      <Icon size={8}><path d="M2 0L6 4L2 8Z" fill="#000" stroke="none" /></Icon>
    </SearchGo>
    <SearchBox aria-label="Search" placeholder="Type a keyword or phrase" />
    <InfoTools>
      <ToolButton type="button" aria-label="Find">
        <Icon size={17} color="#222">
          <path d="M1.500 15.500V9L4.500 3.500V1.500H7V15.500ZM9.500 15.500V1.500H12V3.500L15.500 9V15.500ZM7 5H9.500M7 9H9.500M1.500 11.500H7M9.500 11.500H15.500" fill="#f2f2f2" strokeWidth="1.300" />
          <path d="M4.500 4V11M12 4V11" strokeWidth=".8" />
        </Icon>
      </ToolButton>
      <ToolButton type="button" aria-label="Subscription">
        <Icon size={17} color="#333">
          <circle cx="5.500" cy="5.500" r="4.500" fill="#f4f4f4" strokeWidth="1.200" /><circle cx="4.500" cy="4.500" r="1.200" />
          <path d="M8.500 8L16 14V16H13.500L12 14.500L10.500 13L9 12L7 9.500" fill="#eee" strokeWidth="1.200" />
        </Icon>
      </ToolButton>
      <ToolButton type="button" aria-label="Communication">
        <Icon size={17} color="#333">
          <path d="M3 5Q4 12 13 12Q11 15 7 13Q2 10 3 5Z" fill="#ddd" strokeWidth="1.200" />
          <path d="M3 5Q3 3 6 5L13 12M8 7L13 2M5 13L3 16H12L10 13.500" strokeWidth="1.200" /><circle cx="13.500" cy="2" r="1" fill="#333" />
        </Icon>
      </ToolButton>
      <ToolButton type="button" aria-label="Favorites">
        <Icon size={17} color="#333">
          <path d="M8.500 1.500L10.500 6.500H16L11.500 9.800L13.200 15.200L8.500 12L3.800 15.200L5.500 9.800L1 6.500H6.500Z" fill="#fff" strokeWidth="1.200" />
        </Icon>
      </ToolButton>
    </InfoTools>
    <Account type="button">
      <Icon size={16} color="#2a4a86">
        <path d="M1 15.500V13Q1 11.500 6 11V9.500Q4 8 4 5Q4 1 8 1Q12 1 12 5Q12 8 10 9.500V11Q15 11.500 15 13V15.500Z" fill="#6f9de6" />
      </Icon>
      <span>RDAOU</span>
      <Caret />
    </Account>
    <InfoEnd>
      <ToolButton type="button" aria-label="Exchange">
        <Icon size={16} color="#1d2f60">
          <path d="M1 2H6Q8 3 8 6Q8 3 10 2H15Q10 8 15 14H10Q8 13 8 10Q8 13 6 14H1Q6 8 1 2Z" fill="#3d63b3" strokeWidth="1.300" />
          <path d="M4 4Q8 8 4 12M12 4Q8 8 12 12" stroke="#8fb0ea" />
        </Icon>
      </ToolButton>
      <Rule />
      <ToolButton type="button" aria-label="Help">
        <Icon size={17} color="#24487f">
          <circle cx="8.500" cy="8.500" r="7.500" fill="#fff" stroke="#444" />
          <path d="M6 6.500Q6 4 8.500 4Q11 4 11 6.300Q11 7.600 9.500 8.300Q8.500 8.900 8.500 10.200M8.500 11.500V13.300" strokeWidth="2" />
        </Icon>
        <Caret />
      </ToolButton>
    </InfoEnd>
    <FrameEnd>
      <FrameButton type="button" $w={29} aria-label="Minimize">
        <Icon size={12}><rect x="1" y="5" width="10" height="3" fill="#fff" stroke="#666" /></Icon>
      </FrameButton>
      <FrameButton type="button" $w={27} aria-label="Restore">
        <Icon size={12}>
          <path d="M4 1.500H11V8H4Z" strokeWidth="1.500" /><rect x="1.500" y="4" width="6.500" height="6.500" fill="#888" strokeWidth="1.500" />
        </Icon>
      </FrameButton>
      <FrameButton type="button" $w={46} $close aria-label="Close"><CloseGlyph /></FrameButton>
    </FrameEnd>
  </TitleBar>
);

const TwoWindows = ({ close }: { close?: boolean }) => (
  <Icon size={32} color={ICON_GREY}>
    {close ? (
      <>
        <path d="M4 14.500V2.500H24V7M8 17.500H6.500V7.500H26V12" />
        <path d="M5 4H23M7 9H25" strokeWidth="3" />
        <rect x="9.500" y="13.500" width="19" height="14" fill="#f4f4f4" /><path d="M10 15H28" strokeWidth="3" />
        <path d="M21 22L29 30M29 22L21 30" stroke="#aaa" strokeWidth="3" />
      </>
    ) : (
      <>
        <rect x="1.500" y="2.500" width="19" height="14" fill="#f4f4f4" /><path d="M2 4H20" strokeWidth="3" />
        <rect x="10.500" y="14.500" width="19" height="15" fill="#f4f4f4" /><path d="M11 16H29" strokeWidth="3" />
        <path d="M23 5H27Q29 6 29 11M25 2L22 5L25 8M3 20Q2 25 6 26H8M6 23L9 26L6 29" strokeWidth="1.300" />
      </>
    )}
  </Icon>
);

const RibbonArea = () => (
  <Ribbon>
    <RibbonPanel $w={546}>
      <PanelBody $pad={435}>
        <CommandColumn>
          <Command type="button">
            <Icon size={11} color={ICON_GREY}><path d="M0 3H8V6Q8 9 4 10H0M8 4H10V7L7 8" /></Icon>Render
          </Command>
          <Command type="button">
            <Icon size={11} color={ICON_GREY}><path d="M0 1H5L9 4V10H0M2 5A2 2 0 1 1 6 5A2 2 0 1 1 2 5" /></Icon>Render in Cloud
          </Command>
          <Command type="button">
            <Icon size={11} color={ICON_GREY}><path d="M0 1H3V3H0ZM6 1H9V3H6ZM0 5H9V10H0ZM3 7H6V10" /></Icon>Render Gallery
          </Command>
        </CommandColumn>
      </PanelBody>
      <PanelTitle>
        <Launcher type="button" aria-label="Panel settings">
          <Icon size={7}><path d="M1 1L6 6M6 2V6H2" /></Icon>
        </Launcher>
      </PanelTitle>
    </RibbonPanel>

    <RibbonPanel $w={475} $grow>
      <PanelBody>
        <BigCommand type="button" $w={48}>
          <Icon size={32} color={ICON_GREY}>
            <path d="M2 14L17 2L30 11L26 16V24L13 31L5 26V17Z" fill="#ececec" />
            <path d="M2 14L5 17L13 11L17 2M13 11L26 16M13 17V31M5 17L13 21L26 15" />
            <path d="M8 20V27L11 28.500V21.500Z" fill="#bbb" />
          </Icon>
          <BigLabel><span>3D<br />View</span><Caret /></BigLabel>
        </BigCommand>
        <BigCommand type="button" $w={44}>
          <Icon size={32} color={ICON_GREY}>
            <path d="M15 1L31 15L15 31Z" fill="#bdbdbd" /><circle cx="14.500" cy="15" r="8.500" fill="#f4f4f4" />
          </Icon>
          <BigLabel><span>Section</span></BigLabel>
        </BigCommand>
        <BigCommand type="button" $w={62}>
          <Icon size={32} color={ICON_GREY}>
            <path d="M7 9H15L20 14V24L15 30H7L3 24V14Z" strokeDasharray="5 1" strokeWidth="1.500" />
            <path d="M16 10Q18 5 21 6" strokeWidth="1.500" />
            <circle cx="26" cy="6.500" r="5" /><path d="M21 7H31M24 5L26 9L28 4" />
          </Icon>
          <BigLabel><span>Callout</span></BigLabel>
          <BelowCaret><Caret /></BelowCaret>
        </BigCommand>
        <CommandColumn $w={101} $lead>
          <Command type="button">
            <Icon color={ICON_GREY}><path d="M.5 2.500H12L15.500 5.500V14.500H.5ZM4 5.500H8V7.500H12V12H7V10H4Z" /></Icon>Plan Views<Caret />
          </Command>
          <Command type="button">
            <Icon color={ICON_GREY}><path d="M8 2L14.500 9H1.500Z" fill={ICON_GREY} /><path d="M4.500 9H11.500V14H4.500Z" fill="#eee" /></Icon>Elevation<Caret />
          </Command>
        </CommandColumn>
        <CommandColumn $w={122}>
          <Command type="button">
            <Icon color={ICON_GREY}><path d="M2.500 10V1.500H10L13.500 5V10" /><path d="M1 9.500H15V14H1Z" fill="#ddd" /><path d="M3 7H13" /></Icon>Drafting View
          </Command>
          <Command type="button">
            <Icon color={ICON_GREY}><path d="M1 4V1H4M8 1H10V3M1 8V10H3M4 4H9V9H4ZM7.500 12V14.500H10M15 12V14.500M13 7H15V9" /><rect x="9.500" y="9.500" width="4" height="4" /></Icon>Duplicate View<Caret />
          </Command>
          <Command type="button">
            <Icon color={ICON_GREY}><rect x=".5" y="1.500" width="15" height="13" /><path d="M1 3H15" strokeWidth="2" /><path d="M3 6H6V8H3ZM3 10.500H6V12.500H3ZM9 6.500H13M9 8.500H13M9 10.500H13M9 12.500H13" /></Icon>Legends<Caret />
          </Command>
        </CommandColumn>
        <CommandColumn>
          <Command type="button">
            <Icon color={ICON_GREY}><rect x=".5" y="2.500" width="14" height="11" /><path d="M0 4H15" strokeWidth="2" /><path d="M1 7.500H15M1 10.500H15M4.500 5V13M8.500 5V13M11.500 5V13" /></Icon>Schedules<Caret />
          </Command>
          <Command type="button">
            <Icon color={ICON_GREY}><circle cx="8" cy="2.500" r="2" /><circle cx="2.500" cy="9" r="2" /><path d="M8 5V14M5 9H15M6 7H11V12" strokeWidth="1.300" /><circle cx="8" cy="12" r="2" /></Icon>Scope Box
          </Command>
        </CommandColumn>
      </PanelBody>
      <PanelTitle>Create</PanelTitle>
    </RibbonPanel>

    <RibbonPanel $w={112}>
      <PanelBody $pad={15}>
        <IconGrid>
          <GridButton type="button" aria-label="Sheet">
            <Icon color={ICON_GREY}><path d="M5 3.500H11L15.500 7.500V14.500H2.500V7M11 3.500V7.500H15" /><path d="M3 .5V5.500M.5 3H5.500M1 1L5 5M5 1L1 5" /></Icon>
          </GridButton>
          <GridButton type="button" aria-label="Title Block">
            <Icon color={ICON_GREY}><path d="M.5 2.500H11L15.500 6.500V14.500H.5Z" /><path d="M7 10H13V13H7ZM10 10V13" strokeWidth="2" /></Icon>
          </GridButton>
          <GridButton type="button" aria-label="Matchline">
            <Icon color={ICON_GREY}><path d="M6 2.500H.5V14.500H6M10 2.500H12L15.500 6V14.500H10M8 1V16" /><path d="M3 5H5V12H3M13 8H11V12H13" /></Icon>
          </GridButton>
          <GridButton type="button" aria-label="Place View">
            <Icon color={ICON_GREY}><path d="M.5 4.500H4M10 3.500L15.500 7.500V14.500H.5V4.500M7 0V4M4 3L7 6L10 3Z" strokeWidth="1.300" /><path d="M5 8H10V12H5Z" /></Icon>
          </GridButton>
          <GridButton type="button" aria-label="View Reference">
            <Icon color={ICON_GREY}><path d="M12.500 1L15.500 6H9.500Z" /><path d="M2 7H7L10 10V15H1V7ZM8 8L10 6" strokeWidth="1.300" /></Icon>
          </GridButton>
          <GridButton type="button" aria-label="Revisions">
            <Icon color={ICON_GREY}><rect x=".5" y="4.500" width="2" height="2" /><path d="M3 5.500H6" /><circle cx="10.500" cy="5.500" r="5" /><path d="M9.500 4L11 3V8" /><path d="M9 10.500H15V15H12V13H9Z" /></Icon>
          </GridButton>
          <GridButton type="button" aria-label="Guide Grid" $col={2}>
            <Icon color={ICON_GREY}><path d="M1 3.500H16M1 7.500H16M1 11.500H16M3.500 1V16M8.500 1V16M12.500 1V16" strokeDasharray="2 1" /></Icon>
          </GridButton>
          <GridButton type="button" aria-label="Viewports" $col={3}>
            <Icon color={ICON_GREY}><path d="M.5 2.500H11L15.500 6.500V14.500H.5Z" /><rect x="3.500" y="5.500" width="7" height="6" strokeDasharray="2 1" strokeWidth="1.500" /></Icon>
            <Caret />
          </GridButton>
        </IconGrid>
      </PanelBody>
      <PanelTitle>Sheet Composition</PanelTitle>
    </RibbonPanel>

    <RibbonPanel $w={217}>
      <PanelBody>
        <BigCommand type="button" $w={70}>
          <TwoWindows />
          <BigLabel><span>Switch<br />Windows</span><Caret /></BigLabel>
        </BigCommand>
        <BigCommand type="button" $w={44}>
          <TwoWindows close />
          <BigLabel><span>Close<br />Hidden</span></BigLabel>
        </BigCommand>
        <CommandColumn $w={16} $lead>
          <Command type="button" aria-label="Replicate">
            <Icon color={ICON_GREY}><rect x=".5" y="3.500" width="12" height="11" /><path d="M1 5H12" strokeWidth="2" /><path d="M13 0V6M10 3H16M11 1L15 5M15 1L11 5" /></Icon>
          </Command>
          <Command type="button" aria-label="Cascade">
            <Icon color={ICON_GREY}><path d="M3 9H.5V1.500H11V4M5 12H3V4.500H13V7" strokeWidth="1.500" /><rect x="5.500" y="7.500" width="10" height="7" /><path d="M6 9H15" strokeWidth="2" /></Icon>
          </Command>
          <Command type="button" aria-label="Tile">
            <Icon color={ICON_GREY}><path d="M4.500 1.500H12.500V6.500H4.500ZM4.500 9.500H12.500V14.500H4.500Z" /><path d="M5 3H12M5 11H12" /></Icon>
          </Command>
        </CommandColumn>
        <PanelRule />
        <BigCommand type="button" $w={66}>
          <Icon size={32} color={ICON_GREY}>
            <rect x="1.500" y="3.500" width="27" height="25" fill="#f6f6f6" /><path d="M2 5H28" strokeWidth="3" /><path d="M2 9.500H28M7.500 9V28M3 13H6M3 16H6M3 19H6M3 22H6M3 25H6M5 7.500H26" />
            <path d="M24 16V30H28V16Q31 15 30 11L28 13H25L23 11Q21 15 24 16Z" fill="#f4f4f4" />
          </Icon>
          <BigLabel><span>User<br />Interface</span><Caret /></BigLabel>
        </BigCommand>
      </PanelBody>
      <PanelTitle>Windows</PanelTitle>
    </RibbonPanel>
    <RibbonTail />
  </Ribbon>
);

export default function App() {
  return (
    <>
      <Global />
      <Shell>
        <Titles />
        <TabBar>
          <Tab type="button" $w={100}>Massing &amp; Site</Tab>
          <Tab type="button" $w={81}>Collaborate</Tab>
          <Tab type="button" $w={43} $active>View</Tab>
          <Tab type="button" $w={65}>Manage</Tab>
          <Tab type="button" $w={56}>Modify</Tab>
          <TabToggle type="button" aria-label="Minimize ribbon">
            <Svg $w={14} $h={9} viewBox="0 0 14 9" color="#444">
              <rect x=".5" y=".5" width="13" height="8" rx="2" fill="#d5d5d5" /><path d="M4.500 6L7 3L9.500 6Z" fill="#444" stroke="none" />
            </Svg>
            <Caret />
          </TabToggle>
        </TabBar>
        <RibbonArea />
        <OptionStrip />
        <DocTitle>
          <span>e 06.rvt</span>
          <DocClose type="button" aria-label="Close view">
            <Icon size={11}><path d="M2 2L9 9M9 2L2 9" strokeWidth="2" /></Icon>
          </DocClose>
        </DocTitle>
        <DocView>
          <DocLines>
            <span>e)</span>
            <LineTail>Parapet</LineTail>
          </DocLines>
          <VTrack>
            <ScrollArrow dir="up" />
            <Thumb />
            <Gap $grow={1} />
            <ScrollArrow dir="down" />
          </VTrack>
        </DocView>
        <Workspace>
          <Palette>
            <PaletteHead>
              <SelectWrap $w={214}>
                <TypeSelect aria-label="Element type">
                  <option>Floor Plan: Ground Floor - Furniture</option>
                </TypeSelect>
                <Svg $w={7} $h={4} viewBox="0 0 7 4" color="#000"><path d="M0 0H7L3.500 4Z" fill="currentColor" stroke="none" /></Svg>
              </SelectWrap>
              <EditType type="button">
                <Icon color="#555"><path d="M1 2H6V6H1ZM1 10H6V14H1ZM3 6V10" /><rect x="8.500" y="4.500" width="6.500" height="10" fill="#eef" /><path d="M10 7H14" stroke="#46a" strokeWidth="2" /><path d="M10 10H14M10 12H14" strokeDasharray="1 1" /></Icon>
                Edit Type
              </EditType>
            </PaletteHead>
            <PaletteBody>
              <Props>
                <tbody>{rows.map(r => <PropertyRow key={r.name} row={r} />)}</tbody>
              </Props>
              <VTrack>
                <ScrollArrow dir="up" />
                <Gap $grow={79} />
                <Thumb $long>
                  <Icon size={8}><path d="M0 1.500H7M0 3.500H7M0 5.500H7M0 7.500H7" /></Icon>
                </Thumb>
                <Gap $grow={69} />
                <ScrollArrow dir="down" />
              </VTrack>
            </PaletteBody>
            <PaletteFoot>
              <HelpLink href="#properties">Properties help</HelpLink>
              <ApplyButton type="button">Apply</ApplyButton>
            </PaletteFoot>
          </Palette>
          <Windows>
            <MdiWindow title="Floor Plan: Ground Floor - Furniture Layout - Practice 06.rvt" grow={528}>
              <FloorPlan />
            </MdiWindow>
            <MdiWindow title="Section: Section 1 - Practice 06.rvt" grow={526} section>
              <SectionView />
            </MdiWindow>
          </Windows>
        </Workspace>
        <StatusBar>
          <StatusText>Ceilings : Compound Ceiling : 600 x 1200mm Grid : R0</StatusText>
          <StatusIcon type="button" aria-label="Worksets">
            <Icon><path d="M1 8H6V15H1ZM6 3H10V15H6ZM10 6H15V15H10Z" fill="#aaa" stroke="#888" /><circle cx="8" cy="3" r="2" fill="#888" stroke="none" /></Icon>
          </StatusIcon>
          <SelectWrap $w={206}>
            <StatusSelect aria-label="Active workset" disabled><option></option></StatusSelect>
            <Svg $w={7} $h={4} viewBox="0 0 7 4" color="#999"><path d="M0 0H7L3.500 4Z" fill="currentColor" stroke="none" /></Svg>
          </SelectWrap>
          <Flat type="button" $w={53}>
            <Icon color="#999"><path d="M4 1.500H14V6H4ZM8 6L5 13M2 14H8" fill="#ddd" strokeWidth="1.500" /></Icon>:0
          </Flat>
          <StatusIcon type="button" aria-label="Design options">
            <Icon><rect x="1" y="1" width="14" height="14" rx="2" fill="#a8a8a8" stroke="#999" /></Icon>
          </StatusIcon>
          <StatusIcon type="button" aria-label="Add to set">
            <Icon><path d="M1 2H14V14H1Z" fill="#a8a8a8" stroke="none" /><path d="M4 10H11M8 7L11 10L8 13" stroke="#fff" strokeWidth="2" /></Icon>
          </StatusIcon>
          <SelectWrap $w={155}>
            <StatusSelect aria-label="Active option" disabled><option>Main Model</option></StatusSelect>
            <Svg $w={7} $h={4} viewBox="0 0 7 4" color="#999"><path d="M0 0H7L3.500 4Z" fill="currentColor" stroke="none" /></Svg>
          </SelectWrap>
          <StatusEnd>
            <StatusIcon type="button" aria-label="Select links">
              <Icon><path d="M4.500 2A3 3 0 1 0 4.500 8H11.500A3 3 0 1 0 11.500 2ZM4.500 5H11M8 5V14" strokeWidth="2.500" stroke="#aaa" /><path d="M10 8L15 13L12 13L13 16" fill="#aaa" /></Icon>
            </StatusIcon>
            <StatusIcon type="button" aria-label="Select underlay">
              <Icon><path d="M1 10L10 1H15V8L9 14L1 12Z" fill="#a8a8a8" stroke="none" /><path d="M10 7V15L12 13L15 14Z" fill="#999" stroke="#ddd" /></Icon>
            </StatusIcon>
            <StatusIcon type="button" aria-label="Select pinned">
              <Icon><path d="M3 1H10L9 7L13 9L8 11L2 9L4 7Z" fill="#a8a8a8" stroke="none" /><path d="M8 9V15" strokeWidth="2" /><path d="M10 7V15L12 13L15 14Z" fill="#999" stroke="#ddd" /></Icon>
            </StatusIcon>
            <StatusIcon type="button" aria-label="Select by face">
              <Icon><path d="M2 2H10V10H13V14H2Z" fill="#a8a8a8" stroke="none" /><path d="M10 1L15 6M15 1L10 6" strokeWidth="1.500" /><path d="M9 7V15L11 13L14 14Z" fill="#999" stroke="#ddd" /></Icon>
            </StatusIcon>
            <StatusIcon type="button" aria-label="Drag on selection">
              <Icon><path d="M5 1V11M0 6H10M10 1L15 6M15 1L10 6" strokeWidth="1.500" strokeDasharray="2 1" /><path d="M9 7V15L11 13L14 14Z" fill="#eee" stroke="#999" /></Icon>
            </StatusIcon>
            <Flat type="button" $w={30}>
              <Icon color="#444"><path d="M1 1.500H15V4L9.500 9V14.500L6.500 13V9L1 4Z" fill="#c9d2dc" strokeWidth="1.300" /></Icon>:0
            </Flat>
          </StatusEnd>
        </StatusBar>
        <ViewRangeDialog />
      </Shell>
    </>
  );
}
